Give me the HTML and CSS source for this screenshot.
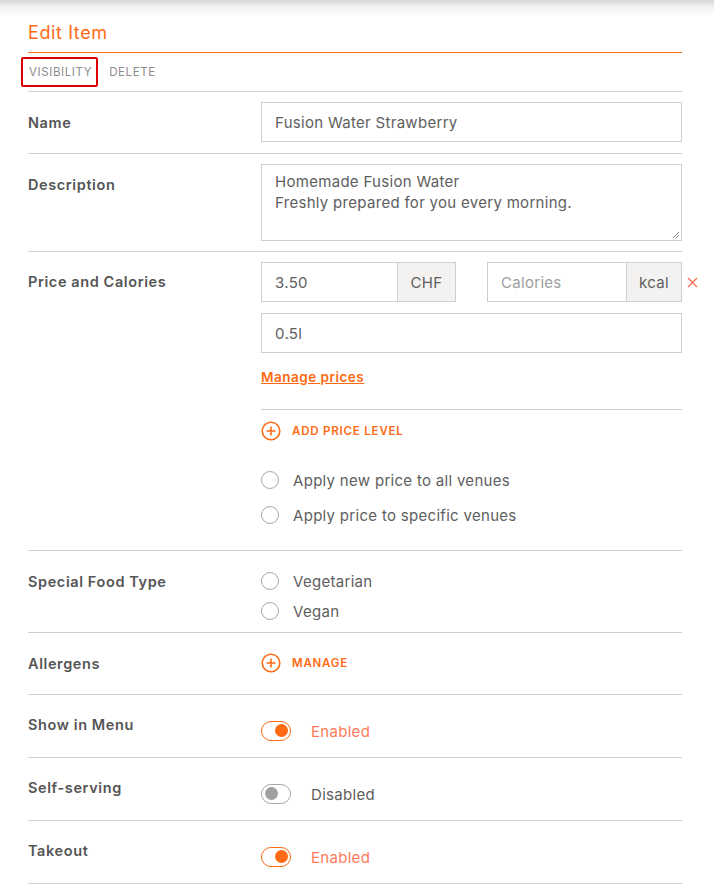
FILE: index.html
```html
<!DOCTYPE html>
<html>
<head>
<meta charset="utf-8">
<link rel="stylesheet" href="styles.css">
</head>
<body>
<div class="shade"></div>
<div class="page">
  <h1 class="title">Edit Item</h1>
  <div class="tabs">
    <span class="tab active">VISIBILITY</span>
    <span class="tab">DELETE</span>
  </div>

  <div class="row row-name">
    <div class="label">Name</div>
    <div class="field"><div class="input">Fusion Water Strawberry</div></div>
  </div>

  <div class="row row-desc">
    <div class="label">Description</div>
    <div class="field">
      <div class="textarea">Homemade Fusion Water<br>Freshly prepared for you every morning.
        <svg class="grip" width="8" height="8" viewBox="0 0 8 8"><path d="M7 1L1 7M7 4L4 7" stroke="#888" stroke-width="1"/></svg>
      </div>
    </div>
  </div>

  <div class="row row-price">
    <div class="label">Price and Calories</div>
    <div class="field">
      <div class="price-line">
        <div class="group g-price"><div class="gi">3.50</div><div class="addon">CHF</div></div>
        <div class="group g-cal"><div class="gi placeholder">Calories</div><div class="addon">kcal</div></div>
        <svg class="remove" width="11" height="11" viewBox="0 0 11 11"><path d="M1 1L10 10M10 1L1 10" stroke="#ff6a52" stroke-width="1.3"/></svg>
      </div>
      <div class="input size">0.5l</div>
      <a class="manage-link">Manage prices</a>
      <div class="sub-sep"></div>
      <div class="action add-level">
        <svg class="plus" width="20" height="20" viewBox="0 0 20 20"><circle cx="10" cy="10" r="8.8" fill="none" stroke="#ff6a13" stroke-width="1.6"/><path d="M10 5.5v9M5.5 10h9" stroke="#ff6a13" stroke-width="1.6"/></svg>
        <span>ADD PRICE LEVEL</span>
      </div>
      <div class="radios venues">
        <div class="radio"><span class="circle"></span>Apply new price to all venues</div>
        <div class="radio"><span class="circle"></span>Apply price to specific venues</div>
      </div>
    </div>
  </div>

  <div class="row row-food">
    <div class="label">Special Food Type</div>
    <div class="field">
      <div class="radios food">
        <div class="radio"><span class="circle"></span>Vegetarian</div>
        <div class="radio"><span class="circle"></span>Vegan</div>
      </div>
    </div>
  </div>

  <div class="row row-allergens">
    <div class="label">Allergens</div>
    <div class="field">
      <div class="action">
        <svg class="plus" width="20" height="20" viewBox="0 0 20 20"><circle cx="10" cy="10" r="8.8" fill="none" stroke="#ff6a13" stroke-width="1.6"/><path d="M10 5.5v9M5.5 10h9" stroke="#ff6a13" stroke-width="1.6"/></svg>
        <span>MANAGE</span>
      </div>
    </div>
  </div>

  <div class="row row-toggle">
    <div class="label">Show in Menu</div>
    <div class="field toggle-field"><span class="toggle on"><span class="knob"></span></span><span class="state on">Enabled</span></div>
  </div>
  <div class="row row-toggle">
    <div class="label">Self-serving</div>
    <div class="field toggle-field"><span class="toggle off"><span class="knob"></span></span><span class="state off">Disabled</span></div>
  </div>
  <div class="row row-toggle">
    <div class="label">Takeout</div>
    <div class="field toggle-field"><span class="toggle on"><span class="knob"></span></span><span class="state on">Enabled</span></div>
  </div>
</div>
</body>
</html>
```

FILE: styles.css
```css
html, body {
  margin: 0;
  padding: 0;
  background: #fff;
}
body {
  font-family: "Inter", "Open Sans", sans-serif;
  color: #5e5e5e;
  font-size: 15px;
  letter-spacing: 0.3px;
}
.shade {
  height: 16px;
  background: linear-gradient(to bottom, #d6d6d6 0%, #f2f2f2 45%, #ffffff 100%);
}
.page {
  margin: 0 32px 0 28px;
}
.title {
  margin: 0;
  padding-top: 7px;
  height: 29px;
  font-size: 18px;
  font-weight: 400;
  letter-spacing: 0.6px;
  color: #ff6a13;
  border-bottom: 1px solid #ff6a13;
  line-height: 20px;
}
.tabs {
  height: 38px;
  border-bottom: 1px solid #cfcfcf;
  display: flex;
  align-items: center;
  gap: 16px;
  position: relative;
}
.tab {
  font-size: 11.5px;
  color: #8c8c8c;
  letter-spacing: 0.6px;
  padding-left: 1px;
}
.tab.active {
  position: relative;
}
.tab.active::after {
  content: "";
  position: absolute;
  left: -7px;
  right: -6px;
  top: -8px;
  bottom: -8px;
  border: 2px solid #e00000;
  border-radius: 2px;
}
.row {
  display: grid;
  grid-template-columns: 233px 421px;
  border-bottom: 1px solid #cfcfcf;
}
.label {
  font-weight: 600;
  font-size: 14.5px;
  letter-spacing: 0.6px;
  color: #555;
}
.row-name { height: 61px; align-items: start; }
.row-name .label { padding-top: 22px; }
.row-name .field { padding-top: 10px; }
.input, .textarea, .gi {
  box-sizing: border-box;
  border: 1px solid #cfcfcf;
  padding: 0 13px;
  font-size: 15px;
  color: #5e5e5e;
  background: #fff;
}
.input {
  height: 40px;
  line-height: 39px;
}
.row-desc { height: 97px; }
.row-desc .label { padding-top: 22px; }
.row-desc .field { padding-top: 10px; }
.textarea {
  height: 77px;
  padding-top: 6px;
  line-height: 21px;
  position: relative;
}
.grip {
  position: absolute;
  right: 1px;
  bottom: 1px;
}
.row-price .label { padding-top: 21px; }
.row-price .field { padding-top: 10px; padding-bottom: 23px; }
.price-line {
  display: flex;
  align-items: center;
  position: relative;
}
.group {
  display: flex;
  height: 40px;
}
.gi {
  height: 40px;
  line-height: 39px;
}
.g-price .gi { width: 136px; border-right: none; }
.g-cal { margin-left: 31px; }
.g-cal .gi { width: 139px; border-right: none; }
.placeholder { color: #9e9e9e; }
.addon {
  box-sizing: border-box;
  height: 40px;
  line-height: 39px;
  border: 1px solid #cfcfcf;
  background: #f3f2f1;
  font-size: 15px;
  color: #5e5e5e;
  text-align: center;
}
.g-price .addon { width: 59px; }
.g-cal .addon { width: 56px; }
.remove {
  position: absolute;
  right: -16px;
  top: 15px;
}
.size { margin-top: 11px; }
.manage-link {
  display: inline-block;
  margin-top: 16px;
  color: #ff6a13;
  text-decoration: underline;
  font-weight: 600;
  font-size: 13.5px;
  letter-spacing: 0.5px;
}
.sub-sep {
  border-top: 1px solid #cfcfcf;
  margin-top: 23px;
}
.action {
  display: flex;
  align-items: center;
  gap: 11px;
  color: #ff6a13;
  font-size: 11.5px;
  font-weight: 600;
  letter-spacing: 0.8px;
}
.add-level { margin-top: 11px; }
.radios { display: flex; flex-direction: column; }
.venues { margin-top: 27px; gap: 11px; }
.radio {
  display: flex;
  align-items: center;
  gap: 14px;
  font-size: 15px;
  color: #5e5e5e;
  height: 24px;
}
.circle {
  width: 18px;
  height: 18px;
  box-sizing: border-box;
  border: 1.5px solid #a8a8a8;
  border-radius: 50%;
}
.row-food .label { padding-top: 22px; }
.row-food .field { padding-top: 18px; padding-bottom: 9px; }
.food { gap: 6px; }
.row-allergens { height: 61px; }
.row-allergens .label { padding-top: 22px; }
.row-allergens .field { padding-top: 20px; }
.row-toggle { height: 62px; }
.row-toggle .label { padding-top: 21px; }
.toggle-field {
  display: flex;
  align-items: center;
  gap: 20px;
  padding-top: 26px;
  align-self: start;
}
.toggle {
  box-sizing: border-box;
  width: 30px;
  height: 20px;
  border-radius: 10px;
  border: 1.5px solid #ff6a13;
  position: relative;
  display: inline-block;
}
.toggle .knob {
  position: absolute;
  width: 13px;
  height: 13px;
  border-radius: 50%;
  top: 2px;
  background: #ff6a13;
  right: 2.5px;
}
.toggle.off { border-color: #a8a8a8; }
.toggle.off .knob { background: #a0a0a0; left: 2.5px; right: auto; }
.state { font-size: 15px; }
.state.on { color: #ff7a5a; }
.state.off { color: #5e5e5e; }
```
